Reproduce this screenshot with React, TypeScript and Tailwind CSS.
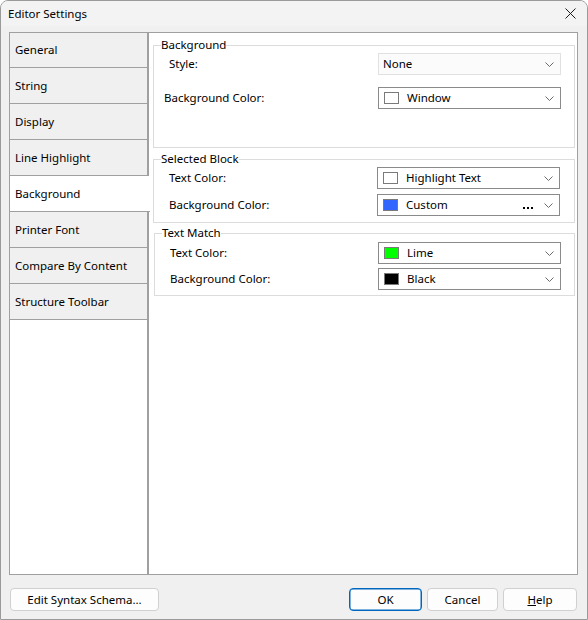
import React from 'react';

const tabs = [
  'General',
  'String',
  'Display',
  'Line Highlight',
  'Background',
  'Printer Font',
  'Compare By Content',
  'Structure Toolbar',
];

const Chevron = () => (
  <svg width="9" height="5" viewBox="0 0 9 5" className="shrink-0">
    <path d="M0.5 0.5 L4.5 4.5 L8.5 0.5" fill="none" stroke="#6b6b6b" strokeWidth="1" />
  </svg>
);

type ComboProps = {
  value: string;
  swatch?: string;
  dots?: boolean;
  light?: boolean;
};

const Combo = ({ value, swatch, dots, light }: ComboProps) => (
  <div
    className={
      'w-[183px] h-[22px] flex items-center pr-[6px] ' +
      (light
        ? 'bg-[#fbfbfb] border border-[#e1e1e1] pl-[4px]'
        : 'bg-white border border-[#8a8a8a] pl-[5px]')
    }
  >
    {swatch && (
      <span
        className="w-[15px] h-[12px] border border-[#7a7a7a] shrink-0 mr-[8px]"
        style={{ backgroundColor: swatch }}
      />
    )}
    <span className="flex-1 text-[#000] leading-none">{value}</span>
    {dots && (
      <span className="flex gap-[2px] mr-[11px] mt-[5px]">
        <span className="w-[2px] h-[2px] bg-black" />
        <span className="w-[2px] h-[2px] bg-black" />
        <span className="w-[2px] h-[2px] bg-black" />
      </span>
    )}
    <Chevron />
  </div>
);

const Row = ({ label, labelPad, children }: { label: string; labelPad: string; children: React.ReactNode }) => (
  <div className="flex items-center justify-between">
    <span className={labelPad}>{label}</span>
    {children}
  </div>
);

const Group = ({ title, className, inner, children }: { title: string; className: string; inner: string; children: React.ReactNode }) => (
  <fieldset className={'border border-[#dcdcdc] ' + className}>
    <legend className="ml-[7px] px-0 leading-[14px]">{title}</legend>
    <div className={inner}>{children}</div>
  </fieldset>
);

const Button = ({ children, primary, className }: { children: React.ReactNode; primary?: boolean; className: string }) => (
  <button
    className={
      'h-[23px] rounded-[4px] bg-[#fdfdfd] text-black ' +
      (primary ? 'border border-[#0067c0] shadow-[inset_0_0_0_0.5px_#0067c0] ' : 'border border-[#d0d0d0] ') +
      className
    }
  >
    {children}
  </button>
);

export default function App() {
  const selected = 'Background';

  return (
    <div
      className="w-[588px] h-[620px] bg-[#f0f0f0] flex flex-col text-[11.5px] text-black border border-[#9a9a9a] rounded-t-[8px] overflow-hidden"
      style={{ fontFamily: '"Noto Sans", "Open Sans", sans-serif' }}
    >
      <div className="h-[25px] bg-[#f3f3f3] flex items-center justify-between pl-[7px] pr-[11px] shrink-0">
        <span>Editor Settings</span>
        <svg width="11" height="11" viewBox="0 0 11 11">
          <path d="M0.5 0.5 L10.5 10.5 M10.5 0.5 L0.5 10.5" stroke="#1a1a1a" strokeWidth="1" />
        </svg>
      </div>

      <div className="flex pl-[8px] pt-[6px] h-[549px] shrink-0">
        {/* tab column */}
        <div className="w-[139px] flex flex-col relative z-10">
          {tabs.map((t, i) => {
            const active = t === selected;
            return (
              <div
                key={t}
                className={
                  'h-[36px] flex items-center pl-[5px] border-l border-b border-[#a0a0a0] ' +
                  (i === 0 ? 'border-t ' : '') +
                  (active ? 'bg-white w-[141px]' : 'bg-[#f0f0f0] border-r')
                }
              >
                {t}
              </div>
            );
          })}
          <div className="flex-1 bg-white border-l border-r border-b border-[#a0a0a0]" />
        </div>

        {/* page */}
        <div className="w-[430px] bg-white border border-[#a0a0a0] pl-[4px] pr-[2px] pt-[5px]">
          <Group title="Background" className="h-[110px]" inner="flex flex-col gap-[12px] pt-[1px] pl-[10px] pr-[13px]">
            <Row label="Style:" labelPad="pl-[5px]">
              <Combo value="None" light />
            </Row>
            <Row label="Background Color:" labelPad="">
              <Combo value="Window" swatch="#ffffff" />
            </Row>
          </Group>

          <Group title="Selected Block" className="mt-[4px] h-[71px]" inner="flex flex-col gap-[5px] pt-[1px] pl-[15px] pr-[14px]">
            <Row label="Text Color:" labelPad="">
              <Combo value="Highlight Text" swatch="#ffffff" />
            </Row>
            <Row label="Background Color:" labelPad="">
              <Combo value="Custom" swatch="#3366ff" dots />
            </Row>
          </Group>

          <Group title="Text Match" className="mt-[3px] ml-[1px] h-[70px]" inner="flex flex-col gap-[4px] pt-[2px] pl-[15px] pr-[13px]">
            <Row label="Text Color:" labelPad="">
              <Combo value="Lime" swatch="#00ff00" />
            </Row>
            <Row label="Background Color:" labelPad="">
              <Combo value="Black" swatch="#000000" />
            </Row>
          </Group>
        </div>
      </div>

      <div className="flex items-center pl-[9px] pt-[13px]">
        <Button className="w-[149px]">Edit Syntax Schema...</Button>
        <div className="flex-1" />
        <Button primary className="w-[73px]">OK</Button>
        <Button className="w-[71px] ml-[5px]">Cancel</Button>
        <Button className="w-[74px] ml-[5px] mr-[10px]">
          <span className="underline">H</span>elp
        </Button>
      </div>
    </div>
  );
}
